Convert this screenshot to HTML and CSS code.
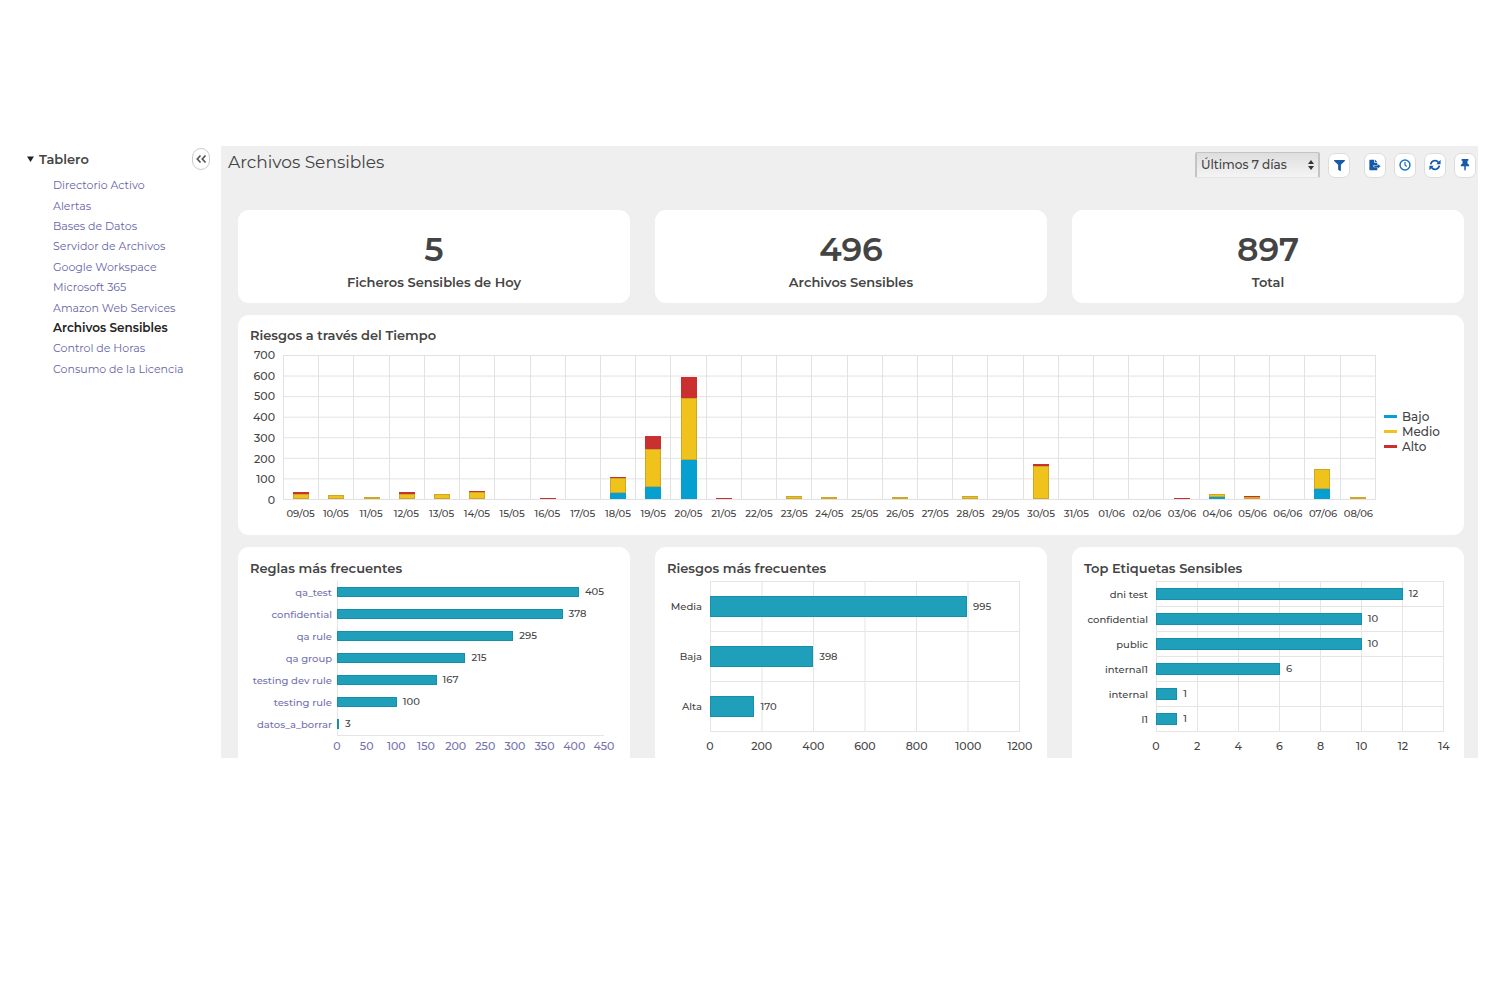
FILE: index.html
```html
<!DOCTYPE html>
<html lang="es">
<head>
<meta charset="utf-8">
<title>Archivos Sensibles</title>
<link rel="stylesheet" href="styles.css">
</head>
<body>
<div class="app">
  <nav class="sidebar" aria-label="Tablero">
    <div class="sidebar-head">
      <svg class="caret" viewBox="0 0 8 7" aria-hidden="true"><path d="M0 0.500h8L4 7z" fill="#222"/></svg>
      <span class="sidebar-title">Tablero</span>
      <button class="collapse" aria-label="Contraer menú">
        <svg viewBox="0 0 12 10" width="12" height="10" fill="none" stroke="#555" stroke-width="1.700"><path d="M5.500 1.500L2.300 5l3.200 3.500M10.500 1.500L7.300 5l3.200 3.500"/></svg>
      </button>
    </div>
    <ul class="menu">
      <li><a href="#">Directorio Activo</a></li>
      <li><a href="#">Alertas</a></li>
      <li><a href="#">Bases de Datos</a></li>
      <li><a href="#">Servidor de Archivos</a></li>
      <li><a href="#">Google Workspace</a></li>
      <li><a href="#">Microsoft 365</a></li>
      <li><a href="#">Amazon Web Services</a></li>
      <li><a href="#" class="active" aria-current="page">Archivos Sensibles</a></li>
      <li><a href="#">Control de Horas</a></li>
      <li><a href="#">Consumo de la Licencia</a></li>
    </ul>
  </nav>

  <main class="main">
    <header class="topbar">
      <h1>Archivos Sensibles</h1>
      <div class="tools">
        <div class="select-wrap">
          <select class="range" aria-label="Periodo"><option>Últimos 7 días</option></select>
          <svg class="arrows" viewBox="0 0 6 10" aria-hidden="true"><path d="M0 4L3 0l3 4zM0 6h6L3 10z" fill="#333"/></svg>
        </div>
        <button class="tool tool-filter" aria-label="Filtrar"><svg viewBox="0 0 512 512"><path fill="#1559a8" d="M488 0H24C3 0-8 26 7 41l185 185v206c0 8 4 15 10 20l80 56c16 11 38 0 38-20V226L505 41c15-15 4-41-17-41z"/></svg></button>
        <button class="tool" aria-label="Exportar"><svg viewBox="0 0 16 14"><path fill="#1559a8" d="M1.500 0H7v4h4v3H6v3h5v4H1.500A1 1 0 0 1 .500 13V1A1 1 0 0 1 1.500 0zM8 0l3 3H8zM11.500 5.500L15.500 8.500l-4 3V9.500H7v-2h4.500z"/></svg></button>
        <button class="tool" aria-label="Programar"><svg viewBox="0 0 14 14" fill="none" stroke="#1b70bf" stroke-width="1.700"><circle cx="7" cy="7" r="5.800"/><path d="M7 3.500V7l2 1.800" stroke-width="1.400"/></svg></button>
        <button class="tool" aria-label="Actualizar"><svg viewBox="0 0 14 14"><path d="M2 6.200A5 5 0 0 1 11 4M12 7.800A5 5 0 0 1 3 10" fill="none" stroke="#1559a8" stroke-width="2"/><path fill="#1559a8" d="M13.500 1v5H8.500zM.500 13V8h5z"/></svg></button>
        <button class="tool" aria-label="Fijar"><svg viewBox="0 0 12 16"><path fill="#1559a8" d="M1.500 0h9v2.200H9.300V6c1.500.600 2.400 1.800 2.400 3.800H7V14l-1 2-1-2V9.800H.300C.300 7.800 1.200 6.600 2.700 6V2.200H1.500z"/></svg></button>
      </div>
    </header>

    <div class="dashboard">
      <section class="card stat"><strong>5</strong><h2>Ficheros Sensibles de Hoy</h2></section>
      <section class="card stat"><strong>496</strong><h2>Archivos Sensibles</h2></section>
      <section class="card stat"><strong>897</strong><h2>Total</h2></section>

      <section class="card timeline">
        <h2>Riesgos a través del Tiempo</h2>
        <div class="timeline-body">
          <div class="y-axis"><span>700</span><span>600</span><span>500</span><span>400</span><span>300</span><span>200</span><span>100</span><span>0</span></div>
          <div class="plot">
            <div class="day"><i class="alto" style="height:1.600%"></i><i class="medio" style="height:3.200%"></i></div>
            <div class="day"><i class="medio" style="height:2.500%"></i></div>
            <div class="day"><i class="medio" style="height:1.300%"></i></div>
            <div class="day"><i class="alto" style="height:1.400%"></i><i class="medio" style="height:3.800%"></i></div>
            <div class="day"><i class="medio" style="height:3.800%"></i></div>
            <div class="day"><i class="alto" style="height:0.700%"></i><i class="medio" style="height:5%"></i></div>
            <div class="day"></div>
            <div class="day"><i class="alto" style="height:0.700%"></i></div>
            <div class="day"></div>
            <div class="day"><i class="alto" style="height:0.700%"></i><i class="medio" style="height:11%"></i><i class="bajo" style="height:3.900%"></i></div>
            <div class="day"><i class="alto" style="height:9.300%"></i><i class="medio" style="height:26%"></i><i class="bajo" style="height:8.600%"></i></div>
            <div class="day"><i class="alto" style="height:14.300%"></i><i class="medio" style="height:42.900%"></i><i class="bajo" style="height:27.400%"></i></div>
            <div class="day"><i class="alto" style="height:0.700%"></i></div>
            <div class="day"></div>
            <div class="day"><i class="medio" style="height:1.900%"></i></div>
            <div class="day"><i class="medio" style="height:0.700%"></i></div>
            <div class="day"></div>
            <div class="day"><i class="medio" style="height:0.700%"></i></div>
            <div class="day"></div>
            <div class="day"><i class="medio" style="height:1.900%"></i></div>
            <div class="day"></div>
            <div class="day"><i class="alto" style="height:1.400%"></i><i class="medio" style="height:22.600%"></i></div>
            <div class="day"></div>
            <div class="day"></div>
            <div class="day"></div>
            <div class="day"><i class="alto" style="height:0.700%"></i></div>
            <div class="day"><i class="medio" style="height:2.300%"></i><i class="bajo" style="height:1.400%"></i></div>
            <div class="day"><i class="alto" style="height:0.700%"></i><i class="medio" style="height:0.700%"></i></div>
            <div class="day"></div>
            <div class="day"><i class="medio" style="height:14%"></i><i class="bajo" style="height:6.900%"></i></div>
            <div class="day"><i class="medio" style="height:1.200%"></i></div>
          </div>
          <ul class="legend">
            <li><i class="bajo"></i>Bajo</li>
            <li><i class="medio"></i>Medio</li>
            <li><i class="alto"></i>Alto</li>
          </ul>
          <div class="dates"><span>09/05</span><span>10/05</span><span>11/05</span><span>12/05</span><span>13/05</span><span>14/05</span><span>15/05</span><span>16/05</span><span>17/05</span><span>18/05</span><span>19/05</span><span>20/05</span><span>21/05</span><span>22/05</span><span>23/05</span><span>24/05</span><span>25/05</span><span>26/05</span><span>27/05</span><span>28/05</span><span>29/05</span><span>30/05</span><span>31/05</span><span>01/06</span><span>02/06</span><span>03/06</span><span>04/06</span><span>05/06</span><span>06/06</span><span>07/06</span><span>08/06</span></div>
        </div>
      </section>

      <section class="card ranking">
        <h2>Reglas más frecuentes</h2>
        <div class="bars rules">
          <div class="names"><a href="#">qa_test</a><a href="#">confidential</a><a href="#">qa rule</a><a href="#">qa group</a><a href="#">testing dev rule</a><a href="#">testing rule</a><a href="#">datos_a_borrar</a></div>
          <div class="area">
            <div class="row"><i style="width:90.600%"></i><span>405</span></div>
            <div class="row"><i style="width:84.500%"></i><span>378</span></div>
            <div class="row"><i style="width:66%"></i><span>295</span></div>
            <div class="row"><i style="width:48.100%"></i><span>215</span></div>
            <div class="row"><i style="width:37.300%"></i><span>167</span></div>
            <div class="row"><i style="width:22.400%"></i><span>100</span></div>
            <div class="row"><i style="width:0.700%"></i><span>3</span></div>
          </div>
          <div class="ticks"><span>0</span><span>50</span><span>100</span><span>150</span><span>200</span><span>250</span><span>300</span><span>350</span><span>400</span><span>450</span></div>
        </div>
      </section>

      <section class="card ranking">
        <h2>Riesgos más frecuentes</h2>
        <div class="bars risks">
          <div class="names"><span>Media</span><span>Baja</span><span>Alta</span></div>
          <div class="area">
            <div class="row"><i style="width:83.200%"></i><span>995</span></div>
            <div class="row"><i style="width:33.400%"></i><span>398</span></div>
            <div class="row"><i style="width:14.400%"></i><span>170</span></div>
          </div>
          <div class="ticks"><span>0</span><span>200</span><span>400</span><span>600</span><span>800</span><span>1000</span><span>1200</span></div>
        </div>
      </section>

      <section class="card ranking">
        <h2>Top Etiquetas Sensibles</h2>
        <div class="bars labels">
          <div class="names"><span>dni test</span><span>confidential</span><span>public</span><span>internal1</span><span>internal</span><span>l1</span></div>
          <div class="area">
            <div class="row"><i style="width:86%"></i><span>12</span></div>
            <div class="row"><i style="width:71.700%"></i><span>10</span></div>
            <div class="row"><i style="width:71.700%"></i><span>10</span></div>
            <div class="row"><i style="width:43.200%"></i><span>6</span></div>
            <div class="row"><i style="width:7.400%"></i><span>1</span></div>
            <div class="row"><i style="width:7.400%"></i><span>1</span></div>
          </div>
          <div class="ticks"><span>0</span><span>2</span><span>4</span><span>6</span><span>8</span><span>10</span><span>12</span><span>14</span></div>
        </div>
      </section>
    </div>
  </main>
</div>
</body>
</html>
```
FILE: styles.css
```css
* { box-sizing: border-box; }
body {
  margin: 0;
  background: #fff;
  color: #444;
  font: 500 11px/16px Montserrat, Inter, "Open Sans", sans-serif;
}
h1, h2, ul { margin: 0; padding: 0; }
ul { list-style: none; }
a { color: #7472b0; text-decoration: none; }
i { display: block; flex: none; }
button { padding: 0; font: inherit; cursor: pointer; }

.app {
  display: grid;
  grid-template-columns: 221px minmax(0, 1fr);
  padding: 146px 22px 0 0;
}

/* Sidebar */
.sidebar { padding: 2px 11px 0 27px; }
.sidebar-head { display: flex; align-items: center; }
.caret { width: 7px; height: 6px; margin-right: 5px; }
.sidebar-title { font-size: 13px; font-weight: 600; }
.collapse {
  display: flex;
  align-items: center;
  justify-content: center;
  width: 18px;
  height: 22px;
  margin-left: auto;
  border: 1px solid #ccc;
  border-radius: 9px;
  background: #fff;
}
.menu {
  display: flex;
  flex-direction: column;
  height: 209px;
  padding: 5px 0 0 26px;
}
.menu li { display: flex; flex: 1; align-items: center; }
.menu a { color: #6664a8; font-weight: 400; white-space: nowrap; }
.menu .active { color: #222; font-size: 12px; font-weight: 600; }

/* Header */
.main { background: #efefef; }
.topbar {
  display: flex;
  align-items: flex-start;
  justify-content: space-between;
  height: 64px;
  padding: 5px 2px 0 7px;
}
h1 { font-size: 17px; line-height: 22px; font-weight: 400; }
.tools { display: flex; align-items: center; gap: 8px; padding-top: 1px; }
.select-wrap { position: relative; }
.range {
  appearance: none;
  display: block;
  width: 125px;
  height: 26px;
  padding: 0 4px;
  border: 1px solid #c4c4c4;
  border-width: 1px 2px;
  border-bottom-color: #e4e4e4;
  border-radius: 2px;
  background: linear-gradient(#dedede, #f4f4f4);
  color: #444;
  font: inherit;
  font-size: 12px;
}
.arrows { position: absolute; right: 6px; top: 8px; width: 6px; height: 10px; pointer-events: none; }
.tool {
  display: flex;
  align-items: center;
  justify-content: center;
  width: 22px;
  height: 25px;
  border: 1px solid #ddd;
  border-radius: 7px;
  background: #fff;
}
.tool svg { width: 12px; height: 12px; }
.tool-filter { margin-right: 6px; }
.tool-filter svg { width: 11px; height: 11px; }

/* Cards */
.dashboard {
  display: grid;
  grid-template-columns: repeat(3, minmax(0, 1fr));
  gap: 12px 25px;
  padding: 0 14px 0 17px;
}
.card { border-radius: 11px; background: #fff; }
h2 { font-size: 13px; line-height: 18px; font-weight: 600; }
.stat { height: 93px; padding: 20px 12px 0; text-align: center; }
.stat strong { display: block; font-size: 33px; line-height: 38px; font-weight: 600; }
.stat h2 { margin-top: 5px; }

/* Stacked columns by day */
.timeline { grid-column: 1 / -1; padding: 11px 24px 13px 12px; }
.timeline-body {
  display: grid;
  grid-template-columns: 25px minmax(0, 1fr) 56px;
  column-gap: 8px;
  padding-top: 11px;
}
.y-axis {
  display: flex;
  flex-direction: column;
  justify-content: space-between;
  margin: -8px 0;
  text-align: right;
}
.plot {
  display: flex;
  height: 145px;
  border-right: 1px solid #e2e2e4;
  border-bottom: 1px solid #e2e2e4;
  background: linear-gradient(#e2e2e4 1px, transparent 1px) 0 0 / 100% calc(100% / 7);
}
.day {
  display: flex;
  flex: 1;
  flex-direction: column;
  align-items: center;
  justify-content: flex-end;
  border-left: 1px solid #e2e2e4;
}
.day i { width: 16px; min-height: 1px; }
.bajo { background: #05a0cf; }
.medio { background: #efc31b; }
.alto { background: #c9302f; }
.day .medio { border: 1px solid #d0a626; }
.legend { align-self: center; padding-top: 8px; font-size: 12px; line-height: 15px; }
.legend li { display: flex; align-items: center; gap: 5px; }
.legend i { width: 13px; height: 3px; }
.dates {
  display: grid;
  grid-column: 2;
  grid-template-columns: repeat(31, minmax(0, 1fr));
  padding-top: 6px;
  font-size: 10px;
}
.dates span { display: flex; justify-content: center; white-space: nowrap; }

/* Horizontal bars */
.ranking { height: 211px; padding: 12px 12px 0; border-radius: 11px 11px 0 0; }
.bars { display: grid; column-gap: 8px; padding-top: 4px; }
.rules { grid-template-columns: 82px minmax(0, 1fr); column-gap: 5px; padding-right: 14px; }
.risks { grid-template-columns: 35px minmax(0, 1fr); padding-right: 15px; }
.labels { grid-template-columns: 64px minmax(0, 1fr); padding-right: 8px; }
.names { display: flex; flex-direction: column; padding-top: 1px; font-size: 10px; }
.names > * { display: flex; flex: 1; align-items: center; justify-content: flex-end; white-space: nowrap; }
.area {
  display: flex;
  flex-direction: column;
  height: 151px;
  background: linear-gradient(90deg, #e6e4e5 1px, transparent 1px);
  font-size: 10px;
}
.row { display: flex; flex: 1; align-items: center; gap: 6px; border-top: 1px solid #e6e4e5; }
.row i { background: #1f9fba; border: 1px solid #1490ac; }
.risks .area { border-right: 1px solid #e6e4e5; border-bottom: 1px solid #e6e4e5; background-size: calc(100% / 6) 100%; }
.labels .area { border-right: 1px solid #e6e4e5; border-bottom: 1px solid #e6e4e5; background-size: calc(100% / 7) 100%; }
.rules .area { height: 155px; border-bottom: 1px solid #e6e4e5; }
.rules .row { border-top: 0; }
.rules i { height: 10px; }
.risks i { height: 21px; }
.labels i { height: 12px; }
.ticks { display: flex; grid-column: 2; justify-content: space-between; padding-top: 6px; }
.rules .ticks { padding-top: 2px; color: #7472b0; }
.ticks span { display: flex; justify-content: center; width: 0; }
```
